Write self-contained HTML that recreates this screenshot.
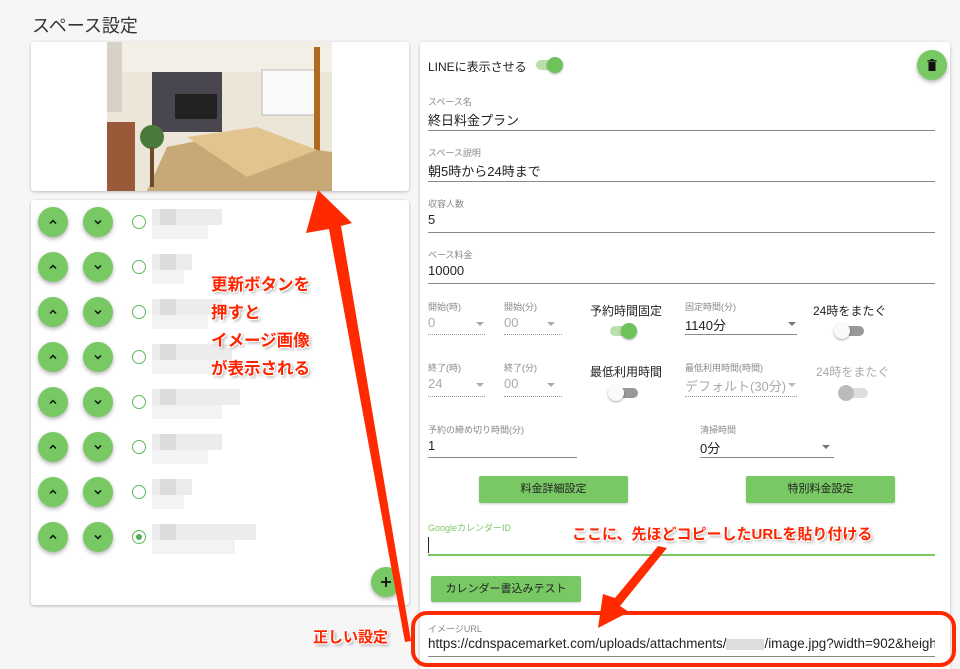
<!DOCTYPE html>
<html style="height:669px;overflow:hidden"><head><meta charset="utf-8"><style>
*{margin:0;padding:0;box-sizing:border-box}
body{width:960px;height:669px;background:#f6f6f6;font-family:"Liberation Sans","Noto Sans CJK JP",sans-serif;position:relative;overflow:hidden;color:#222}
.a{position:absolute;white-space:nowrap}
.card{position:absolute;background:#fff;border-radius:3px;box-shadow:0 1px 3px rgba(0,0,0,.25)}
.lbl{font-size:9px;color:#888}
.val{font-size:13px;color:#222}
.ln{position:absolute;height:1px;background:#888}
.dl{position:absolute;border-top:1px dotted #999}
.fab{position:absolute;width:30px;height:30px;border-radius:50%;background:#78c864;box-shadow:0 2px 4px rgba(0,0,0,.3)}
.fab svg{position:absolute;left:9px;top:9px}
.radio{position:absolute;width:14px;height:14px;border:1.5px solid #5cb85c;border-radius:50%}
.px{position:absolute;background:#e4e4e4}
.btn{position:absolute;background:#78c864;border-radius:2px;font-size:11px;text-align:center;box-shadow:0 1px 2px rgba(0,0,0,.2);color:#222}
.tr{position:absolute;width:26px;height:10px;border-radius:5px}
.kn{position:absolute;width:16px;height:16px;border-radius:50%;box-shadow:0 1px 2px rgba(0,0,0,.35)}
.dd{position:absolute;width:0;height:0;border-left:4px solid transparent;border-right:4px solid transparent;border-top:4px solid #777}
.red{color:#ff2400;font-weight:bold;text-shadow:1px 1px 0 #fff,-1px -1px 0 #fff,1px -1px 0 #fff,-1px 1px 0 #fff,2px 2px 3px rgba(0,0,0,.4)}
</style></head><body>
<div class="a" style="left:32px;top:12px;font-size:18px;color:#333">スペース設定</div>

<div class="card" style="left:31px;top:42px;width:378px;height:149px;overflow:hidden">
 <svg class="a" style="left:76px;top:0" width="225" height="149">
  <rect width="225" height="149" fill="#ece6d8"/>
  <rect x="0" y="0" width="225" height="30" fill="#f2efe6"/>
  <rect x="45" y="30" width="70" height="60" fill="#4a4650"/>
  <rect x="68" y="52" width="42" height="25" fill="#222"/>
  <rect x="155" y="28" width="55" height="45" fill="#fafafa" stroke="#bbb"/>
  <rect x="207" y="5" width="6" height="110" fill="#b06a20"/>
  <rect x="0" y="80" width="28" height="69" fill="#9a5a3a"/>
  <polygon points="40,149 60,105 110,95 225,110 225,149" fill="#c9a877"/>
  <polygon points="80,95 150,85 210,108 140,135" fill="#e2c48e"/>
  <circle cx="45" cy="95" r="12" fill="#4a7a3a"/>
  <rect x="43" y="105" width="4" height="40" fill="#6b4a2a"/>
  <rect x="0" y="0" width="15" height="70" fill="#d8d2c6"/>
 </svg>
</div>

<div class="card" style="left:31px;top:200px;width:378px;height:405px"></div>

<div class="card" style="left:420px;top:42px;width:530px;height:627px;border-radius:3px 3px 0 0"></div>

<div class="a" style="left:428px;top:58px;font-size:12px">LINEに表示させる</div>
<div class="tr" style="left:536px;top:60px;background:#b8e0ab"></div><div class="kn" style="left:547px;top:57px;background:#6cc35a"></div>
<div class="fab" style="left:917px;top:50px"><svg width="12" height="12" viewBox="0 0 12 12"><rect x="2.5" y="3" width="7" height="9" fill="#111"/><rect x="1.5" y="1.2" width="9" height="1.3" fill="#111"/><rect x="4.5" y="0" width="3" height="1.5" fill="#111"/></svg></div>

<div class="a lbl" style="left:428px;top:95px">スペース名</div><div class="a val" style="left:428px;top:110px">終日料金プラン</div><div class="ln" style="left:428px;top:130px;width:507px"></div>
<div class="a lbl" style="left:428px;top:146px">スペース説明</div><div class="a val" style="left:428px;top:161px">朝5時から24時まで</div><div class="ln" style="left:428px;top:181px;width:507px"></div>
<div class="a lbl" style="left:428px;top:197px">収容人数</div><div class="a val" style="left:428px;top:212px">5</div><div class="ln" style="left:428px;top:232px;width:507px"></div>
<div class="a lbl" style="left:428px;top:248px">ベース料金</div><div class="a val" style="left:428px;top:263px">10000</div><div class="ln" style="left:428px;top:283px;width:507px"></div>

<div class="a lbl" style="left:428px;top:300px">開始(時)</div><div class="a val" style="left:428px;top:315px;color:#aaa">0</div><div class="dd" style="left:476px;top:322px;border-top-color:#aaa"></div><div class="dl" style="left:428px;top:334px;width:57px"></div>
<div class="a lbl" style="left:504px;top:300px">開始(分)</div><div class="a val" style="left:504px;top:315px;color:#aaa">00</div><div class="dd" style="left:547px;top:322px;border-top-color:#aaa"></div><div class="dl" style="left:504px;top:334px;width:58px"></div>
<div class="a" style="left:590px;top:302px;font-size:12px">予約時間固定</div>
<div class="tr" style="left:610px;top:326px;background:#b8e0ab"></div><div class="kn" style="left:621px;top:323px;background:#6cc35a"></div>
<div class="a lbl" style="left:685px;top:300px">固定時間(分)</div><div class="a val" style="left:685px;top:315px">1140分</div><div class="dd" style="left:788px;top:322px"></div><div class="ln" style="left:685px;top:334px;width:112px"></div>
<div class="a" style="left:813px;top:302px;font-size:12px">24時をまたぐ</div>
<div class="tr" style="left:838px;top:326px;background:#999"></div><div class="kn" style="left:834px;top:323px;background:#fafafa"></div>

<div class="a lbl" style="left:428px;top:361px">終了(時)</div><div class="a val" style="left:428px;top:376px;color:#aaa">24</div><div class="dd" style="left:476px;top:383px;border-top-color:#aaa"></div><div class="dl" style="left:428px;top:396px;width:57px"></div>
<div class="a lbl" style="left:504px;top:361px">終了(分)</div><div class="a val" style="left:504px;top:376px;color:#aaa">00</div><div class="dd" style="left:547px;top:383px;border-top-color:#aaa"></div><div class="dl" style="left:504px;top:396px;width:58px"></div>
<div class="a" style="left:590px;top:363px;font-size:12px">最低利用時間</div>
<div class="tr" style="left:612px;top:388px;background:#999"></div><div class="kn" style="left:608px;top:385px;background:#fafafa"></div>
<div class="a lbl" style="left:685px;top:361px">最低利用時間(時間)</div><div class="a val" style="left:685px;top:376px;color:#aaa">デフォルト(30分)</div><div class="dd" style="left:788px;top:383px;border-top-color:#bbb"></div><div class="dl" style="left:685px;top:396px;width:112px"></div>
<div class="a" style="left:816px;top:363px;font-size:12px;color:#aaa">24時をまたぐ</div>
<div class="tr" style="left:842px;top:388px;background:#ddd"></div><div class="kn" style="left:838px;top:385px;background:#bbb;box-shadow:none"></div>

<div class="a lbl" style="left:428px;top:423px">予約の締め切り時間(分)</div><div class="a val" style="left:428px;top:438px">1</div><div class="ln" style="left:428px;top:457px;width:149px"></div>
<div class="a lbl" style="left:700px;top:423px">清掃時間</div><div class="a val" style="left:700px;top:438px">0分</div><div class="dd" style="left:822px;top:445px"></div><div class="ln" style="left:700px;top:457px;width:134px"></div>

<div class="btn" style="left:479px;top:476px;width:149px;height:27px;line-height:27px">料金詳細設定</div>
<div class="btn" style="left:746px;top:476px;width:149px;height:27px;line-height:27px">特別料金設定</div>

<div class="a lbl" style="left:428px;top:521px;color:#7cc868">GoogleカレンダーID</div>
<div class="a" style="left:428px;top:537px;width:1px;height:16px;background:#222"></div>
<div class="a" style="left:428px;top:554px;width:507px;height:2px;background:#7cc868"></div>

<div class="btn" style="left:431px;top:576px;width:150px;height:26px;line-height:26px">カレンダー書込みテスト</div>

<div class="a lbl" style="left:428px;top:622px">イメージURL</div>
<div class="a" style="left:428px;top:636px;width:507px;overflow:hidden;font-size:13.4px">https://cdnspacemarket.com/uploads/attachments/<span style="display:inline-block;width:38px;height:11px;background:#ddd;vertical-align:middle"></span>/image.jpg?width=902&amp;height=</div>
<div class="ln" style="left:428px;top:656px;width:507px"></div>

<div id="rows"></div>
<script>
var ys=[222,267,312,357,402,447,492,537],ws=[70,40,70,80,88,70,40,104],h='';
ys.forEach(function(y,i){
 [53,98].forEach(function(x,j){
  h+='<div class="fab" style="left:'+(x-15)+'px;top:'+(y-15)+'px"><svg width="12" height="12" viewBox="0 0 12 12"><path d="'+(j?'M3 4.5l3 3 3-3':'M3 7.5l3-3 3 3')+'" stroke="#111" stroke-width="1.5" fill="none"/></svg></div>';
 });
 h+='<div class="radio" style="left:132px;top:'+(y-7)+'px">'+(i==7?'<div style="position:absolute;left:2.5px;top:2.5px;width:6px;height:6px;border-radius:50%;background:#4caf50"></div>':'')+'</div>';
 h+='<div class="px" style="left:152px;top:'+(y-13)+'px;width:'+ws[i]+'px;height:16px;background:#ececec"></div>';
 h+='<div class="px" style="left:152px;top:'+(y+3)+'px;width:'+Math.round(ws[i]*.8)+'px;height:14px;background:#f3f3f3"></div>';
 h+='<div class="px" style="left:160px;top:'+(y-13)+'px;width:16px;height:16px;background:#dcdcdc"></div>';
});
document.getElementById('rows').innerHTML=h;
</script>
<div class="fab" style="left:371px;top:567px"><svg width="12" height="12" viewBox="0 0 12 12"><path d="M6 1v10M1 6h10" stroke="#111" stroke-width="1.8"/></svg></div>

<div class="a" style="left:411px;top:611px;width:545px;height:56px;border:4px solid #ff2a00;border-radius:16px"></div>
<svg class="a" style="left:0;top:0" width="960" height="669">
 <polygon points="318,190 352,223 341,226 411,641 405,642 329,229 306,233" fill="#ff2a00"/>
 <polygon points="667,548 658,546 615,598 603,594 598,628 629,612 620,606" fill="#ff2a00"/>
</svg>
<div class="a red" style="left:211px;top:271px;font-size:16.5px;line-height:28px">更新ボタンを<br>押すと<br>イメージ画像<br>が表示される</div>
<div class="a red" style="left:313px;top:626px;font-size:15px">正しい設定</div>
<div class="a red" style="left:572px;top:523px;font-size:15px">ここに、先ほどコピーしたURLを貼り付ける</div>
</body></html>
